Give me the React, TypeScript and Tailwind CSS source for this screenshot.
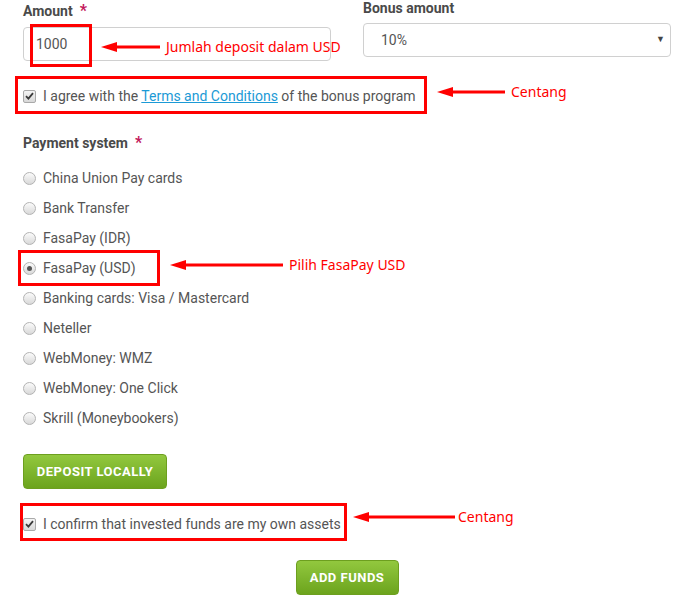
import React from "react";

function Checkbox() {
  return (
    <span className="relative inline-flex h-[13px] w-[13px] shrink-0 items-center justify-center rounded-[2px] border border-[#a9a9a9] bg-gradient-to-b from-[#f4f4f4] to-[#d8d8d8]">
      <svg width="9" height="8" viewBox="0 0 9 8">
        <path d="M1 4.2 L3.4 6.6 L8 1.2" fill="none" stroke="#3a3a3a" strokeWidth="1.8" />
      </svg>
    </span>
  );
}

function Radio({ checked = false }: { checked?: boolean }) {
  return (
    <span className="inline-flex h-[13px] w-[13px] shrink-0 items-center justify-center rounded-full border border-[#b3b3b3] bg-gradient-to-b from-[#fbfbfb] to-[#d9d9d9]">
      {checked && <span className="h-[5px] w-[5px] rounded-full bg-[#555]" />}
    </span>
  );
}

function Arrow({ width }: { width: number }) {
  return (
    <svg width={width} height="12" viewBox={`0 0 ${width} 12`}>
      <polygon points={`0,6 16,1 16,11`} fill="#ff0000" />
      <rect x="14" y="4.5" width={width - 14} height="3" fill="#ff0000" />
    </svg>
  );
}

const payments = [
  "China Union Pay cards",
  "Bank Transfer",
  "FasaPay (IDR)",
  "FasaPay (USD)",
  "Banking cards: Visa / Mastercard",
  "Neteller",
  "WebMoney: WMZ",
  "WebMoney: One Click",
  "Skrill (Moneybookers)",
];

const note = "font-['Noto_Sans',sans-serif] text-[14px] leading-[18px] text-[#ff0000]";

export default function App() {
  return (
    <div className="relative h-[601px] w-[681px] overflow-hidden bg-white pl-[23px] pr-[10px] font-['Roboto',sans-serif] text-[14px] text-[#555]">
      {/* top row */}
      <div className="grid grid-cols-[308px_308px] gap-x-[32px]">
        <div className="pt-[1px]">
          <div className="flex h-[20px] items-center text-[14px] font-bold text-[#4a4a4a]">
            Amount<span className="ml-[7px] text-[16px] font-bold text-[#c2185b]">*</span>
          </div>
          <div className="relative mt-[6px] flex h-[34px] items-center rounded-[4px] border border-[#d0d0d0] pl-[12px] text-[#555]">
            1000
            <div className="absolute left-[6px] top-[-4px] h-[43px] w-[62px] border-[3px] border-[#ff0000]" />
            <div className="absolute left-[77px] top-[10px] flex items-center gap-[6px]">
              <Arrow width={59} />
              <span className={`${note} whitespace-nowrap`}>Jumlah deposit dalam USD</span>
            </div>
          </div>
        </div>
        <div>
          <div className="flex h-[16px] items-center text-[14px] font-bold text-[#4a4a4a]">Bonus amount</div>
          <div className="mt-[7px] flex h-[34px] items-center justify-between rounded-[4px] border border-[#d0d0d0] pl-[17px] pr-[5px] text-[#555]">
            <span>10%</span>
            <span className="text-[9px] text-[#444]">▼</span>
          </div>
        </div>
      </div>

      {/* agree */}
      <div className="relative mt-[25px] flex h-[20px] items-center gap-[7px]">
        <Checkbox />
        <span className="whitespace-nowrap">
          I agree with the <span className="text-[#1b9ad6] underline">Terms and Conditions</span> of the bonus program
        </span>
        <div className="absolute left-[-8px] top-[-10px] h-[38px] w-[412px] border-[3px] border-[#ff0000]" />
        <div className="absolute left-[414px] top-[-3px] flex items-center gap-[6px]">
          <Arrow width={68} />
          <span className={note}>Centang</span>
        </div>
      </div>

      {/* payment system */}
      <div className="mt-[27px] flex h-[20px] items-center font-bold text-[#4a4a4a]">
        Payment system<span className="ml-[7px] text-[16px] text-[#c2185b]">*</span>
      </div>
      <div className="mt-[15px] flex flex-col gap-[10px]">
        {payments.map((p, i) => (
          <div key={p} className="relative flex h-[20px] items-center gap-[7px]">
            <Radio checked={i === 3} />
            <span className="whitespace-nowrap">{p}</span>
            {i === 3 && (
              <>
                <div className="absolute left-[-5px] top-[-8px] h-[36px] w-[142px] border-[3px] border-[#ff0000]" />
                <div className="absolute left-[147px] top-[-2px] flex items-center gap-[6px]">
                  <Arrow width={113} />
                  <span className={`${note} whitespace-nowrap`}>Pilih FasaPay USD</span>
                </div>
              </>
            )}
          </div>
        ))}
      </div>

      {/* deposit locally */}
      <button className="mt-[26px] flex h-[35px] w-[144px] items-center justify-center rounded-[4px] border border-[#6d9f1f] bg-gradient-to-b from-[#92c83e] to-[#6ca41c] text-[13px] font-bold tracking-[0.5px] text-white">
        DEPOSIT LOCALLY
      </button>

      {/* confirm */}
      <div className="relative mt-[25px] flex h-[20px] items-center gap-[7px]">
        <Checkbox />
        <span className="whitespace-nowrap">I confirm that invested funds are my own assets</span>
        <div className="absolute left-[-3px] top-[-11px] h-[38px] w-[327px] border-[3px] border-[#ff0000]" />
        <div className="absolute left-[330px] top-[-6px] flex items-center gap-[3px]">
          <Arrow width={102} />
          <span className={note}>Centang</span>
        </div>
      </div>

      {/* add funds */}
      <div className="mt-[26px] flex w-[648px] justify-center">
        <button className="flex h-[35px] w-[103px] items-center justify-center rounded-[4px] border border-[#6d9f1f] bg-gradient-to-b from-[#92c83e] to-[#6ca41c] text-[13px] font-bold tracking-[0.5px] text-white">
          ADD FUNDS
        </button>
      </div>
    </div>
  );
}
